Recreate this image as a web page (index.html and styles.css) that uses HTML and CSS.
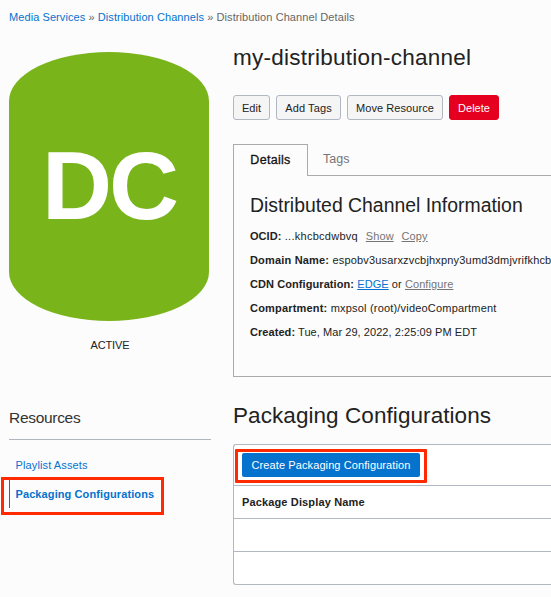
FILE: index.html
```html
<!DOCTYPE html>
<html lang="en">
<head>
<meta charset="utf-8">
<title>Distribution Channel Details</title>
<link rel="stylesheet" href="styles.css">
</head>
<body>
<nav class="breadcrumb"><a href="#">Media Services</a> <span>»</span> <a href="#">Distribution Channels</a> <span>»</span> <span>Distribution Channel Details</span></nav>
<div class="layout">
  <aside class="sidebar">
    <div class="badge">DC</div>
    <div class="status">ACTIVE</div>
    <h3 class="resources-title">Resources</h3>
    <ul class="resources">
      <li><a href="#">Playlist Assets</a></li>
      <li class="current"><a href="#">Packaging Configurations</a></li>
    </ul>
  </aside>
  <main class="main">
    <h1 class="title">my-distribution-channel</h1>
    <div class="actions">
      <button class="btn edit">Edit</button>
      <button class="btn add">Add Tags</button>
      <button class="btn move">Move Resource</button>
      <button class="btn danger">Delete</button>
    </div>
    <div class="tabs">
      <div class="tab active">Details</div>
      <div class="tab">Tags</div>
    </div>
    <section class="panel">
      <h2 class="panel-title">Distributed Channel Information</h2>
      <p class="ocid"><b>OCID:</b> ...khcbcdwbvq <a class="muted gap" href="#">Show</a> <a class="muted gap" href="#">Copy</a></p>
      <p class="domain"><b>Domain Name:</b> espobv3usarxzvcbjhxpny3umd3dmjvrifkhcb</p>
      <p class="cdn"><b>CDN Configuration:</b> <a class="edge" href="#">EDGE</a> or <a class="muted" href="#">Configure</a></p>
      <p class="compartment"><b>Compartment:</b> mxpsol (root)/videoCompartment</p>
      <p class="created"><b>Created:</b> Tue, Mar 29, 2022, 2:25:09 PM EDT</p>
    </section>
    <h2 class="section-title">Packaging Configurations</h2>
    <div class="table">
      <div class="toolbar"><div class="highlight"><button class="create">Create Packaging Configuration</button></div></div>
      <div class="row head">Package Display Name</div>
      <div class="row"></div>
      <div class="row"></div>
    </div>
  </main>
</div>
</body>
</html>
```
FILE: styles.css
```css
* { box-sizing: border-box; }
body {
  margin: 0;
  height: 597px;
  overflow: hidden;
  background: #fcfcfc;
  color: #222;
  font: 11px/14px "Liberation Sans", Arial, sans-serif;
}
h1, h2, h3, p, ul { margin: 0; padding: 0; font-weight: normal; }
a { color: #0572ce; text-decoration: none; }
button { font: inherit; padding: 0; white-space: nowrap; }
.breadcrumb { padding: 10px 0 0 9px; height: 24px; color: #666; white-space: nowrap; letter-spacing: .08px; }
.layout { display: grid; grid-template-columns: 202px 318px; column-gap: 22px; padding-left: 9px; }

.badge {
  width: 200px;
  height: 269px;
  margin-top: 28px;
  border-radius: 100px / 49px;
  background: #78b41a;
  color: #fff;
  font-size: 97px;
  font-weight: bold;
  line-height: 267px;
  letter-spacing: -3px;
  text-align: center;
}
.status { margin-top: 17px; text-align: center; letter-spacing: -.1px; }
.resources-title {
  margin-top: 57px;
  height: 31px;
  border-bottom: 1px solid #aeb6bf;
  font-size: 15.5px;
  line-height: 18px;
  letter-spacing: -.3px;
  color: #333;
}
.resources { list-style: none; margin-top: 11px; }
.resources li { height: 28px; padding-left: 6.5px; line-height: 28px; letter-spacing: .12px; }
.resources .current {
  width: 163px;
  height: 38px;
  margin: -2px 0 0 -8px;
  padding: 0 0 0 5px;
  border: 3px solid #ff2a00;
}
.current a { display: block; height: 28px; padding-left: 5.5px; border-left: 1px solid #0572ce; font-weight: bold; letter-spacing: .1px; }

.title { margin-top: 20px; font-size: 22.5px; line-height: 28px; letter-spacing: .25px; }
.actions { display: flex; gap: 6px; margin-top: 23px; }
.btn { height: 25px; border: 1px solid #b0b8c2; border-radius: 3px; background: #f5f5f5; color: #222; }
.edit { width: 37px; }
.add { width: 65px; letter-spacing: .12px; }
.move { width: 96px; letter-spacing: .08px; }
.danger { width: 50px; border-color: #e5001f; background: #e5001f; color: #fff; }
.tabs { display: flex; margin-top: 24px; height: 31px; }
.tab { padding: 0 15px; font-size: 12.5px; line-height: 31px; color: #757575; }
.tab.active { width: 75px; height: 32px; padding: 0; border: 1px solid #aaa; border-bottom: 0; background: #fcfcfc; color: #111; text-align: center; letter-spacing: .3px; -webkit-text-stroke: .3px #111; z-index: 1; }
.panel { height: 202px; padding: 16px 0 0 16px; border: 1px solid #aaa; border-right: 0; }
.panel-title { font-size: 19.4px; line-height: 26px; margin-bottom: 6px; }
.panel p { height: 24px; line-height: 24px; white-space: nowrap; }
.panel .ocid { letter-spacing: .27px; }
.ocid b { letter-spacing: .05px; }
.ocid a { letter-spacing: .1px; }
.panel .domain { letter-spacing: .18px; }
.panel .cdn { letter-spacing: .08px; }
.panel .compartment { letter-spacing: .19px; }
.panel .created { letter-spacing: .06px; }
.muted { color: #757575; text-decoration: underline; }
.gap { margin-left: 4.5px; }
.edge { text-decoration: underline; }
.section-title { margin-top: 24px; font-size: 22.5px; line-height: 30px; letter-spacing: .07px; }
.table { height: 141px; margin-top: 13px; border: 1px solid #b0b8c2; border-right: 0; border-radius: 3px 0 0 3px; background: #fff; }
.toolbar { height: 40px; padding: 4px 0 0 1px; }
.highlight { width: 192px; height: 34px; padding: 1px 4px; border: 3px solid #ff2a00; border-radius: 1px; }
.create { display: block; width: 178px; height: 24px; border: 0; border-radius: 2px; background: #0572ce; color: #fff; letter-spacing: .1px; }
.row { height: 33px; padding-left: 8px; border-top: 1px solid #b0b8c2; line-height: 32px; }
.head { font-weight: bold; letter-spacing: .14px; }
```
